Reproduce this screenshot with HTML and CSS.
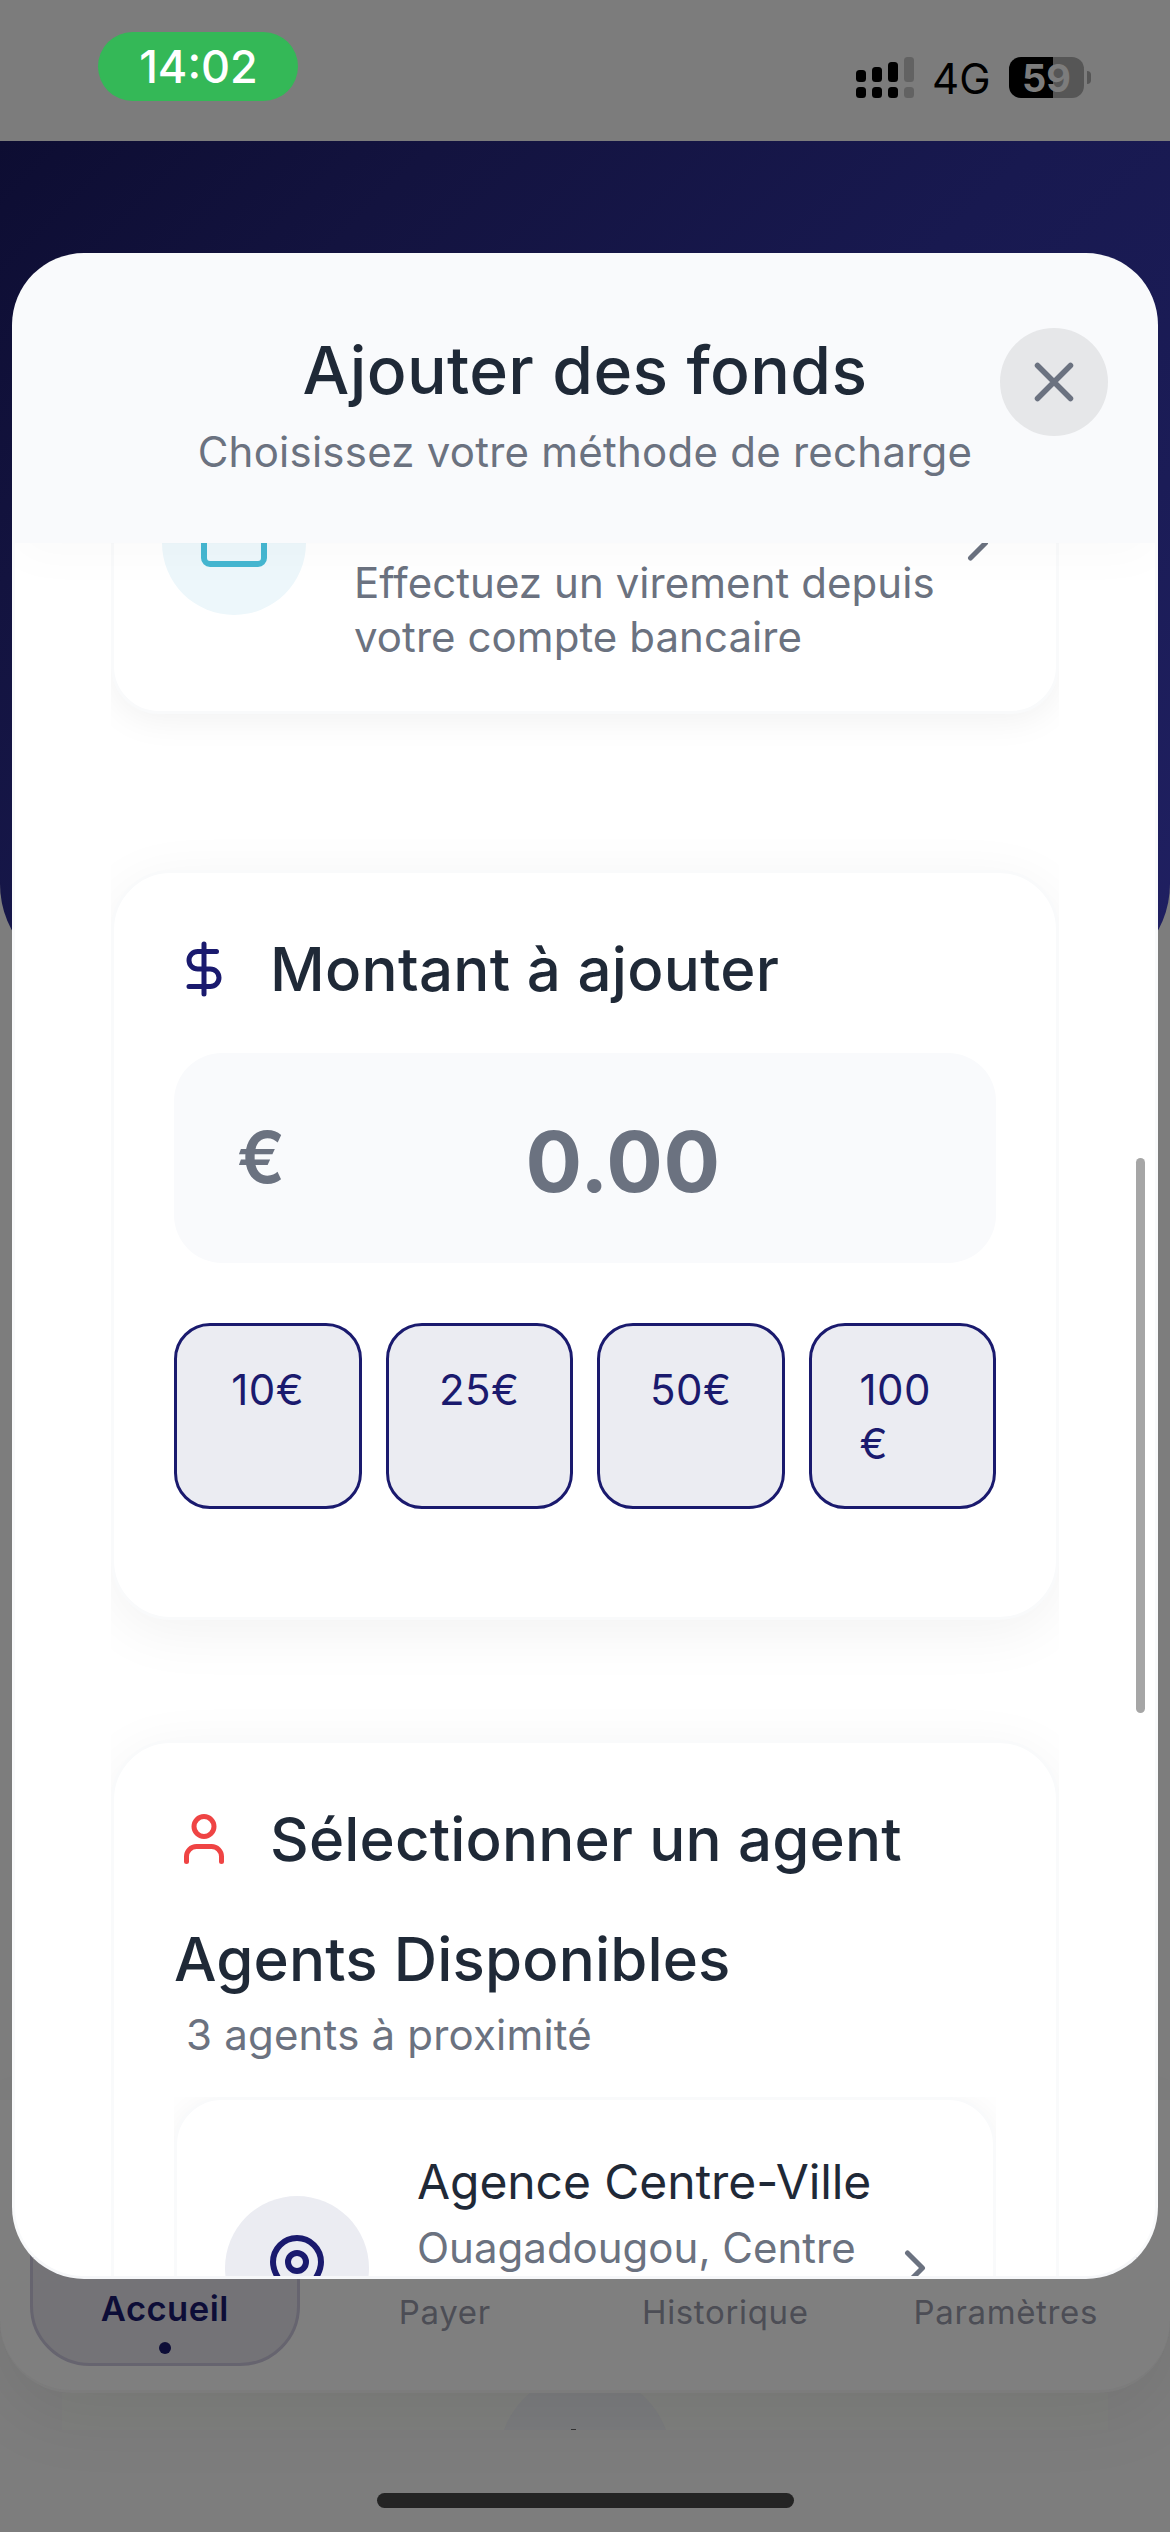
FILE: index.html
```
<!DOCTYPE html>
<html lang="fr">
<head>
<meta charset="utf-8">
<title>Ajouter des fonds</title>
<link rel="stylesheet" href="styles.css">
</head>
<body>
<div class="screen">
  <header class="status">
    <div class="clock">14:02</div>
    <div class="indicators">
      <svg class="signal" width="58" height="41" viewBox="0 0 58 41">
        <rect x="0" y="13" width="10" height="12" rx="3.5"/>
        <rect x="16" y="10" width="10" height="15" rx="3.5"/>
        <rect x="32" y="5" width="10" height="20" rx="3.5"/>
        <rect class="faint" x="48" y="0" width="10" height="25" rx="3.5"/>
        <rect x="0" y="30" width="10" height="11" rx="3.5"/>
        <rect x="16" y="30" width="10" height="11" rx="3.5"/>
        <rect x="32" y="30" width="10" height="11" rx="3.5"/>
        <rect class="faint" x="48" y="30" width="10" height="11" rx="3.5"/>
      </svg>
      <span class="network">4G</span>
      <span class="battery">59</span>
      <span class="battery-cap"></span>
    </div>
  </header>

  <div class="hero"></div>
  <div class="page-fill"></div>

  <div class="bottom">
    <nav class="tabs">
      <div class="tab active"><span>Accueil</span><i class="dot"></i></div>
      <div class="tab"><span>Payer</span></div>
      <div class="tab"><span>Historique</span></div>
      <div class="tab"><span>Paramètres</span></div>
    </nav>
    <div class="peek"><div class="peek-circle"></div><i class="peek-mark"></i></div>
    <div class="home-bar"></div>
  </div>

  <section class="sheet">
    <header class="sheet-head">
      <h1>Ajouter des fonds</h1>
      <p>Choisissez votre méthode de recharge</p>
      <button class="close" aria-label="Fermer">
        <svg width="66" height="66" viewBox="0 0 24 24" class="icon"><path d="M18 6 6 18M6 6l12 12"/></svg>
      </button>
    </header>

    <div class="sheet-body">
      <div class="column">
        <article class="method">
          <div class="badge cyan">
            <svg width="72" height="72" viewBox="0 0 24 24" class="icon"><rect x="2" y="5" width="20" height="14" rx="2"/><path d="M2 10h20"/></svg>
          </div>
          <p class="method-text">Effectuez un virement depuis<br>votre compte bancaire</p>
          <svg width="60" height="60" viewBox="0 0 24 24" class="icon muted"><path d="m9 18 6-6-6-6"/></svg>
        </article>

        <article class="panel amount">
          <h2>
            <svg width="60" height="60" viewBox="0 0 24 24" class="icon navy"><path d="M12 2v20M17 5H9.500a3.500 3.500 0 0 0 0 7h5a3.500 3.500 0 0 1 0 7H6"/></svg>
            <span>Montant à ajouter</span>
          </h2>
          <div class="field"><span class="currency">€</span><span class="value">0.00</span></div>
          <div class="chips">
            <button>10€</button><button>25€</button><button>50€</button><button class="wrap">100<br>€</button>
          </div>
        </article>

        <article class="panel agents">
          <h2 class="wide">
            <svg width="60" height="60" viewBox="0 0 24 24" class="icon red"><path d="M19 21v-2a4 4 0 0 0-4-4H9a4 4 0 0 0-4 4v2"/><circle cx="12" cy="7" r="4"/></svg>
            <span>Sélectionner un agent</span>
          </h2>
          <h3>Agents Disponibles</h3>
          <p class="nearby">3 agents à proximité</p>
          <div class="agent-list">
            <div class="agent">
              <div class="badge navy">
                <svg width="72" height="72" viewBox="0 0 24 24" class="icon"><path d="M20 10c0 5-5.500 10.200-7.400 11.800a1 1 0 0 1-1.200 0C9.500 20.200 4 15 4 10a8 8 0 0 1 16 0"/><circle cx="12" cy="10" r="3"/></svg>
              </div>
              <div class="agent-text">
                <strong>Agence Centre-Ville</strong>
                <span>Ouagadougou, Centre</span>
              </div>
              <svg width="60" height="60" viewBox="0 0 24 24" class="icon muted"><path d="m9 18 6-6-6-6"/></svg>
            </div>
          </div>
        </article>
      </div>
    </div>
    <div class="scrollbar"></div>
  </section>
</div>
</body>
</html>
```
FILE: styles.css
```
* { box-sizing: border-box; }
body { margin: 0; }
h1, h2, h3, p { margin: 0; font-weight: 400; }
button { font: inherit; border: 0; }

.screen {
  position: relative;
  display: flex;
  flex-direction: column;
  width: 1170px;
  height: 2532px;
  overflow: hidden;
  background: #7d7d7d;
  font-family: Inter, "Liberation Sans", sans-serif;
}
.icon {
  flex: none;
  fill: none;
  stroke: currentColor;
  stroke-width: 2;
  stroke-linecap: round;
  stroke-linejoin: round;
}
.muted { color: #6b7280; }
.navy { color: #1a1a6e; }
.red { color: #ef4444; }

/* Status bar */
.status {
  display: flex;
  justify-content: space-between;
  align-items: flex-start;
  height: 141px;
  padding: 32px 79px 0 98px;
  background: #7c7c7c;
}
.clock {
  width: 200px;
  height: 69px;
  padding-left: 1px;
  border-radius: 35px;
  background: #34b857;
  color: #fff;
  font-size: 45px;
  font-weight: 500;
  line-height: 70px;
  text-align: center;
}
.indicators {
  display: flex;
  align-items: center;
  height: 41px;
  margin-top: 25px;
}
.signal { fill: #000; }
.signal .faint { fill: #626262; }
.network {
  margin-left: 18px;
  width: 77px;
  font-size: 42px;
  line-height: 44px;
  padding-top: 2px;
}
.battery {
  width: 75px;
  height: 41px;
  border-radius: 12px;
  background: linear-gradient(90deg, #000 44px, #565656 44px);
  color: #7c7c7c;
  font-size: 38px;
  font-weight: 700;
  line-height: 42px;
  text-align: center;
}
.battery-cap {
  width: 4px;
  height: 13px;
  margin-left: 3px;
  border-radius: 0 5px 5px 0;
  background: #565656;
}

/* Dimmed page behind the sheet */
.hero {
  height: 839px;
  border-radius: 0 0 96px 96px;
  background: linear-gradient(135deg, #0d0d32 0%, #13133f 22%, #181950 52%, #1b1c57 75%, #202062 100%);
}
.page-fill { flex: 1; }
.bottom {
  display: flex;
  flex-direction: column;
  height: 432px;
}
.tabs {
  position: relative;
  z-index: 1;
  display: grid;
  grid-template-columns: repeat(4, 280.5px);
  height: 293px;
  padding: 0 24px 24px;
  border-bottom: 3px solid #7c7c7c;
  border-radius: 0 0 72px 72px;
  background: #7f7f7f;
  box-shadow: 0 24px 72px rgba(0, 0, 0, .07);
}
.tab {
  display: flex;
  flex-direction: column;
  align-items: center;
  justify-content: flex-end;
  padding-bottom: 34px;
  color: #4c4d55;
  font-size: 33px;
  line-height: 40px;
  letter-spacing: .65px;
}
.tab.active {
  margin: 0 5px 0 6px;
  padding-bottom: 9px;
  border: 3px solid #66646f;
  border-radius: 60px;
  background: #747377;
  color: #0d0d37;
  font-size: 34.6px;
  font-weight: 600;
  letter-spacing: .45px;
}
.dot {
  width: 12px;
  height: 12px;
  margin-top: 14px;
  border-radius: 50%;
  background: #0d0d37;
}
.peek {
  position: relative;
  height: 37px;
  margin: 0 62px;
  overflow: hidden;
  background: #7e7f7d;
}
.peek-circle {
  width: 172px;
  height: 172px;
  margin: -20px auto 0;
  border-radius: 50%;
  background: #7a7b7d;
}
.peek-mark {
  position: absolute;
  left: 509px;
  bottom: 0;
  width: 5px;
  height: 1px;
  background: #333;
}
.home-bar {
  width: 417px;
  height: 15px;
  margin: 63px auto 0;
  border-radius: 8px;
  background: #242424;
}

/* Sheet */
.sheet {
  position: absolute;
  z-index: 2;
  left: 12px;
  top: 253px;
  display: flex;
  flex-direction: column;
  width: 1146px;
  height: 2026px;
  border: 3px solid #f9fafb;
  border-bottom-color: #f6f7f9;
  border-radius: 72px;
  overflow: hidden;
  background: #fff;
}
.sheet-head {
  position: relative;
  z-index: 1;
  flex: none;
  height: 287px;
  padding-top: 74px;
  background: #f9fafc;
  box-shadow: 0 12px 48px rgba(0, 0, 0, .025);
  text-align: center;
}
.sheet-head h1 {
  color: #1f2937;
  font-size: 66px;
  font-weight: 500;
  line-height: 80px;
  letter-spacing: .37px;
}
.sheet-head p {
  margin-top: 15px;
  color: #6b7280;
  font-size: 42px;
  line-height: 54px;
  letter-spacing: .24px;
}
.close {
  position: absolute;
  top: 72px;
  right: 47px;
  display: grid;
  place-items: center;
  width: 108px;
  height: 108px;
  padding: 0;
  border-radius: 50%;
  background: #e6e7e9;
  color: #6b7280;
}
.sheet-body {
  flex: 1;
  min-height: 0;
  overflow: hidden;
}
.column {
  display: flow-root;
  margin: -171px 96px 0;
  overflow: hidden;
}
.badge {
  flex: none;
  display: grid;
  place-items: center;
  width: 144px;
  height: 144px;
  border-radius: 50%;
}
.badge.cyan { background: #edf7fb; color: #45b7d1; }
.badge.navy { background: #ebecf2; }

.method {
  display: flex;
  align-items: center;
  height: 342px;
  padding: 45px 48px 47px;
  border: 3px solid #f9fafb;
  border-radius: 48px;
  background: #fff;
  box-shadow: 0 6px 36px rgba(0, 0, 0, .06);
}
.method .badge, .method .icon { margin-top: 2px; }
.method .badge .icon { margin-top: 0; }
.method-text {
  flex: 1;
  align-self: flex-end;
  margin-left: 48px;
  color: #6b7280;
  font-size: 42px;
  line-height: 54px;
  letter-spacing: .06px;
}

.panel {
  padding: 60px;
  border: 3px solid #f9fafb;
  border-radius: 60px;
  background: #fff;
  box-shadow: 0 12px 60px rgba(0, 0, 0, .055);
}
.panel h2, .panel h3 {
  color: #1f2937;
  font-size: 60px;
  font-weight: 500;
  line-height: 72px;
  letter-spacing: .3px;
}
.panel h2 {
  display: flex;
  align-items: center;
  gap: 36px;
  margin-bottom: 48px;
}
.panel h2.wide, .panel h3 { letter-spacing: .15px; }
.amount { height: 750px; margin-top: 156px; }
.agents { margin-top: 120px; height: 800px; }

.field {
  display: flex;
  align-items: center;
  height: 210px;
  padding: 0 60px 0 63px;
  border-radius: 48px;
  background: #f9fafc;
  color: #6b7280;
}
.currency {
  width: 73px;
  font-size: 71px;
  font-weight: 600;
  line-height: 84px;
  padding-bottom: 2px;
}
.value {
  flex: 1;
  padding-top: 7px;
  font-size: 84px;
  font-weight: 700;
  letter-spacing: .5px;
  line-height: 100px;
  text-align: center;
}
.chips {
  display: grid;
  grid-template-columns: repeat(4, 1fr);
  gap: 24px;
  margin-top: 60px;
}
.chips button {
  display: flex;
  justify-content: center;
  align-items: flex-start;
  height: 186px;
  padding: 37px 0 35px;
  border: 3px solid #1a1a6e;
  border-radius: 36px;
  background: #ebecf2;
  color: #1a1a6e;
  font-size: 42px;
  font-weight: 400;
  line-height: 54px;
  letter-spacing: .5px;
}
.chips button.wrap {
  display: block;
  padding-left: 48px;
  text-align: left;
}

.nearby {
  margin: 13px 0 35px 12px;
  color: #6b7280;
  font-size: 42px;
  line-height: 54px;
  letter-spacing: .2px;
}
.agent-list { overflow: hidden; }
.agent {
  display: flex;
  align-items: center;
  height: 342px;
  padding: 0 48px;
  border: 3px solid #f9fafb;
  border-radius: 48px;
  background: #fff;
  box-shadow: 0 6px 36px rgba(0, 0, 0, .06);
}
.agent-text {
  flex: 1;
  display: flex;
  flex-direction: column;
  align-self: flex-start;
  margin: 52px 0 0 48px;
  white-space: nowrap;
}
.agent-text strong {
  color: #1f2937;
  font-size: 48px;
  font-weight: 400;
  line-height: 60px;
  letter-spacing: -.08px;
}
.agent-text span {
  margin-top: 9px;
  color: #6b7280;
  font-size: 42px;
  line-height: 54px;
}
.scrollbar {
  position: absolute;
  z-index: 2;
  right: 10px;
  top: 902px;
  width: 9px;
  height: 555px;
  border-radius: 5px;
  background: #a6a6a6;
}
```
